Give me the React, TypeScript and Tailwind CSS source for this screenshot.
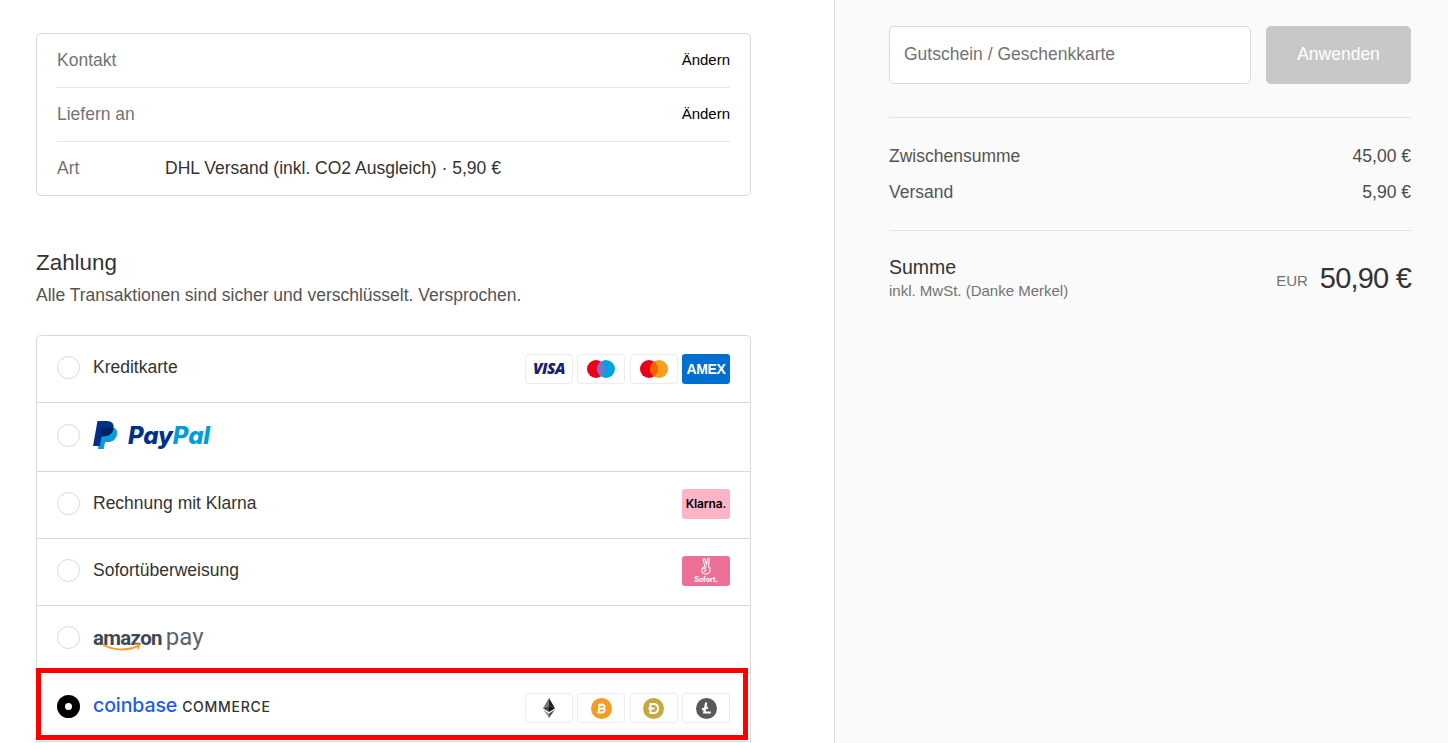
import React from "react";

const Radio = ({ on }: { on?: boolean }) =>
  on ? (
    <span className="flex h-[23px] w-[23px] shrink-0 items-center justify-center rounded-full bg-black">
      <span className="h-[7px] w-[7px] rounded-full bg-white" />
    </span>
  ) : (
    <span className="h-[23px] w-[23px] shrink-0 rounded-full border border-[#d9d9d9] bg-white" />
  );

const Badge = ({ children }: { children: React.ReactNode }) => (
  <span className="flex h-[30px] w-[48px] items-center justify-center rounded-[4px] border border-[#ececec] bg-white">
    {children}
  </span>
);

const Row = ({
  h,
  children,
  right,
  on,
  leftShift = "mb-[4px]",
  rightShift = "",
}: {
  h: string;
  children: React.ReactNode;
  right?: React.ReactNode;
  on?: boolean;
  leftShift?: string;
  rightShift?: string;
}) => (
  <div className={`flex items-center justify-between border-t border-[#d9d9d9] pl-[20px] pr-[20px] first:border-t-0 ${h}`}>
    <div className={`flex items-center gap-[13px] text-[#333] ${leftShift}`}>
      <Radio on={on} />
      {children}
    </div>
    {right && <div className={`flex gap-[4.33px] ${rightShift}`}>{right}</div>}
  </div>
);

const PayPalMark = () => (
  <svg width="25" height="29" viewBox="0 0 25 29" className="shrink-0">
    <path d="M8 6h8.500c5.500 0 8.500 2.500 7.500 7.500-1 5-4.500 7.500-9 7.500h-3l-1.200 7H5z" fill="#0a9ddb" />
    <path d="M4.500 0h9c5.500 0 8 2.800 7 7.800-1 5-4.500 7.400-9.500 7.400H8.500L7 25H0z" fill="#013088" />
    <path d="M8 6.200h7c2.500 0 4.700.4 5.400 1.600-1 4.900-4.400 7.400-9.400 7.400H8.500L7 20.500z" fill="#012169" />
  </svg>
);

const Eth = () => (
  <svg width="12" height="20" viewBox="0 0 14 20" preserveAspectRatio="none">
    <path d="M7 0 0 10.200 7 8z" fill="#777" />
    <path d="M7 0l7 10.200L7 8z" fill="#222" />
    <path d="M0 10.200 7 14V8z" fill="#444" />
    <path d="M14 10.200 7 14V8z" fill="#111" />
    <path d="M0 11.600 7 20v-4.600z" fill="#999" />
    <path d="M14 11.600 7 20v-4.600z" fill="#555" />
  </svg>
);

const Btc = () => (
  <svg width="21" height="21" viewBox="0 0 21 21">
    <circle cx="10.500" cy="10.500" r="10.500" fill="#f49c23" />
    <path
      d="M8.700 5.700 7.600 15.300M11.300 5.300l-.3 2M9.800 15.700l.3-2M7 6.900h4.300c1.600 0 2.500.8 2.300 2-.2 1.200-1 1.700-2.500 1.700H8.300h3.300c1.500 0 2.200.8 2 2-.2 1.300-1.300 1.800-2.800 1.800H6.200"
      fill="none"
      stroke="#fff"
      strokeWidth="1.800"
    />
  </svg>
);

const Doge = () => (
  <svg width="21" height="21" viewBox="0 0 21 21">
    <circle cx="10.500" cy="10.500" r="10.500" fill="#c9a63f" />
    <path d="M7.500 6h3.200c2.700 0 4.300 1.800 4.300 4.500S13.400 15 10.700 15H7.500z" fill="none" stroke="#fff" strokeWidth="2" />
    <path d="M5.500 10.500h6" stroke="#fff" strokeWidth="2" />
  </svg>
);

const Ltc = () => (
  <svg width="21" height="21" viewBox="0 0 21 21">
    <circle cx="10.500" cy="10.500" r="10.500" fill="#58595b" />
    <path d="M10.200 4.500 8.300 14.500h6.500M6 11.500l6-2" fill="none" stroke="#fff" strokeWidth="2.200" />
  </svg>
);

const Peace = () => (
  <svg width="13" height="18" viewBox="0 0 12 17" fill="none" stroke="#fff" strokeWidth="1" strokeLinecap="round" strokeLinejoin="round">
    <path d="M4.600 8.500 2.900 2c-.3-1.200 1.300-1.600 1.700-.5L6 6.300 6.900 1c.2-1.200 1.900-1 1.800.3L7.800 8.400c1.400.3 1.900 1.300 1.500 2.400-.1 2.800-1.800 4.400-4.100 4.400-2.200 0-3.600-1.400-3.600-3.400 0-1.200.5-2.600 1.500-3 .8-.3 1.600-.4 2.500-.3z" />
    <path d="M2 10c1.500-.5 3 0 3.500 1.200M5.500 11.200c-.5.800-1 1.200-1.700 1.500" />
  </svg>
);

export default function App() {
  return (
    <div className="flex h-[743px] overflow-hidden bg-white text-[16px] font-['Liberation_Sans',Arial,sans-serif] text-[#333]">
      <div className="w-[835px] shrink-0 border-r border-[#d9d9d9] pl-[36px] pr-[83px] pt-[33px]">
        <div className="rounded-[5px] border border-[#d9d9d9] px-[20px] text-[17.500px]">
          <div className="flex h-[54px] items-center justify-between border-b border-[#e6e6e6]">
            <span className="text-[#737373]">Kontakt</span>
            <span className="text-[15px] text-black">Ändern</span>
          </div>
          <div className="flex h-[54px] items-center justify-between border-b border-[#e6e6e6]">
            <span className="text-[#737373]">Liefern an</span>
            <span className="text-[15px] text-black">Ändern</span>
          </div>
          <div className="flex h-[53px] items-center">
            <span className="w-[108px] text-[#737373]">Art</span>
            <span className="text-[#333]">DHL Versand (inkl. CO2 Ausgleich) · 5,90 €</span>
          </div>
        </div>

        <h2 className="mt-[54px] text-[22.400px] leading-[26px] text-[#333]">Zahlung</h2>
        <p className="mt-[7px] text-[17.500px] leading-[24px] text-[#545454]">Alle Transaktionen sind sicher und verschlüsselt. Versprochen.</p>

        <div className="relative mt-[28px] rounded-t-[5px] border border-[#d9d9d9] text-[17.500px]">
          <Row
            h="h-[66px]"
            right={
              <>
                <Badge>
                  <span className="font-['Open_Sans',sans-serif] text-[15.500px] font-extrabold italic tracking-[-0.5px] text-[#1a1f71]">VISA</span>
                </Badge>
                <Badge>
                  <svg width="28" height="18" viewBox="0 0 28 18">
                    <circle cx="9" cy="9" r="9" fill="#eb001b" />
                    <circle cx="19" cy="9" r="9" fill="#00a1df" />
                    <path d="M14 1.500a9 9 0 0 1 0 15 9 9 0 0 1 0-15z" fill="#7375cf" />
                  </svg>
                </Badge>
                <Badge>
                  <svg width="28" height="18" viewBox="0 0 28 18">
                    <circle cx="9" cy="9" r="9" fill="#eb001b" />
                    <circle cx="19" cy="9" r="9" fill="#f79e1b" />
                    <path d="M14 1.500a9 9 0 0 1 0 15 9 9 0 0 1 0-15z" fill="#ff5f00" />
                  </svg>
                </Badge>
                <span className="flex h-[30px] w-[48px] items-center justify-center rounded-[3px] bg-[#016fd0]">
                  <span className="text-[14px] font-bold tracking-[-0.3px] text-white">AMEX</span>
                </span>
              </>
            }
          >
            Kreditkarte
          </Row>
          <Row h="h-[69px]">
            <div className="flex items-center gap-[10px]">
              <PayPalMark />
              <span className="mt-[2px] font-['Inter',sans-serif] text-[24px] leading-none font-extrabold italic tracking-[-0.1px] text-[#003087]">
                Pay<span className="text-[#009cde]">Pal</span>
              </span>
            </div>
          </Row>
          <Row
            h="h-[67px]"
            rightShift="mb-[2px]"
            right={
              <span className="flex h-[30px] w-[48px] items-center justify-center rounded-[3px] bg-[#ffb3c7] font-['Inter',sans-serif] text-[12px] font-semibold tracking-[-0.1px] text-black">
                Klarna.
              </span>
            }
          >
            Rechnung mit Klarna
          </Row>
          <Row
            h="h-[67px]"
            rightShift="mb-[2px]"
            right={
              <span className="flex h-[30px] w-[48px] flex-col items-center justify-center rounded-[3px] bg-[#ec6f95] text-white">
                <Peace />
                <span className="font-['Inter',sans-serif] text-[7px] leading-[8px] font-bold">Sofort.</span>
              </span>
            }
          >
            Sofortüberweisung
          </Row>
          <Row h="h-[67px]">
            <div className="relative flex items-baseline gap-[4px] font-['Roboto',sans-serif] text-[#3d4852]">
              <span className="text-[20.500px] leading-[26px] font-bold tracking-[-0.7px]">amazon</span>
              <span className="text-[24px] leading-[26px] text-[#5a6570]">pay</span>
              <svg width="40" height="10" viewBox="0 0 40 10" className="absolute top-[19px] left-[9px]" fill="none">
                <path d="M1 1.500c9 6 24 6.500 35 1.500" stroke="#f79c34" strokeWidth="2" strokeLinecap="round" />
                <path d="M33 1.200l5 .3-2 4.500" stroke="#f79c34" strokeWidth="1.400" strokeLinecap="round" />
              </svg>
            </div>
          </Row>
          <Row
            h="h-[69px]"
            on
            leftShift="mb-[2px]"
            rightShift="mt-[2px]"
            right={
              <>
                <Badge>
                  <Eth />
                </Badge>
                <Badge>
                  <Btc />
                </Badge>
                <Badge>
                  <Doge />
                </Badge>
                <Badge>
                  <Ltc />
                </Badge>
              </>
            }
          >
            <div className="flex items-baseline gap-[5px] font-['Inter',sans-serif]">
              <span className="text-[19.500px] leading-none font-medium tracking-[-0.1px] text-[#1c5cf2]">coinbase</span>
              <span className="text-[14px] leading-none font-medium tracking-[0.7px] text-[#333]">COMMERCE</span>
            </div>
          </Row>
          <div className="h-[60px] border-t border-[#d9d9d9]" />
          <div className="pointer-events-none absolute top-[332px] -left-px h-[72px] w-[712px] border-[5px] border-[#ff0000]" />
        </div>
      </div>

      <div className="flex-1 bg-[#fafafa] pl-[54px] pr-[37px] pt-[26px]">
        <div className="flex gap-[15px]">
          <div className="flex h-[58px] flex-1 items-center rounded-[5px] border border-[#d9d9d9] bg-white px-[14px] pb-[2px] text-[17.500px] text-[#737373]">
            Gutschein / Geschenkkarte
          </div>
          <div className="flex h-[58px] w-[145px] items-center justify-center rounded-[5px] bg-[#c8c8c8] pb-[2px] text-[17.500px] text-white">
            Anwenden
          </div>
        </div>
        <div className="mt-[33px] border-t border-[#e1e1e1] pt-[26px] text-[17.500px] text-[#545454]">
          <div className="flex h-[24px] items-center justify-between">
            <span>Zwischensumme</span>
            <span className="text-[#4b4b4b]">45,00 €</span>
          </div>
          <div className="mt-[12px] flex h-[24px] items-center justify-between">
            <span>Versand</span>
            <span className="text-[#4b4b4b]">5,90 €</span>
          </div>
        </div>
        <div className="mt-[26px] flex items-center justify-between border-t border-[#e1e1e1] pt-[24px]">
          <div>
            <div className="text-[19.500px] leading-[24px] text-[#333]">Summe</div>
            <div className="mt-[3px] text-[15px] leading-[18px] text-[#737373]">inkl. MwSt. (Danke Merkel)</div>
          </div>
          <div className="flex items-center gap-[12px]">
            <span className="mt-[8px] text-[15px] text-[#737373]">EUR</span>
            <span className="text-[29px] leading-[34px] tracking-[-0.8px] text-[#333]">50,90 €</span>
          </div>
        </div>
      </div>
    </div>
  );
}
